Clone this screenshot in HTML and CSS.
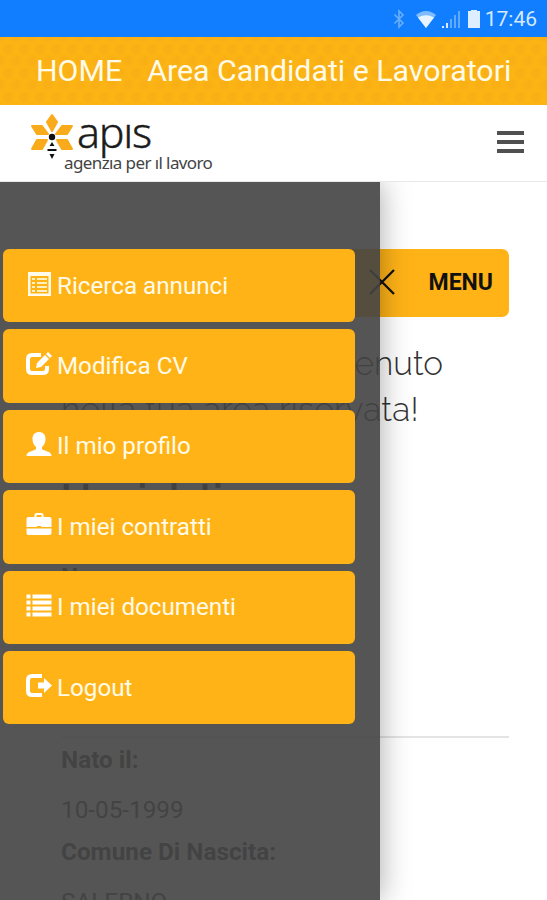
FILE: index.html
```html
<!DOCTYPE html>
<html lang="it">
<head>
    <meta charset="UTF-8">
    <meta name="viewport" content="width=device-width, initial-scale=1.0">
    <title>Apis - Area Candidati e Lavoratori</title>
    <link rel="stylesheet" href="styles.css">
</head>
<body>
    <div class="status-bar">
        <svg class="bluetooth" width="12" height="20" viewBox="0 0 12 20"><path d="M1.500 5.500 10 14 6 18V2l4 4-8.500 8.500" fill="none" stroke="#69aef8" stroke-width="1.600"/></svg>
        <svg class="wifi" width="20" height="17" viewBox="0 0 20 17"><path d="M0 4Q10-4 20 4L10 17Z" fill="#7fbcfb"/><path d="M2 6.500Q10 2 18 6.500L10 17Z" fill="#e8f4ff"/></svg>
        <svg class="signal" width="19" height="18" viewBox="0 0 19 18"><path d="M0 18v-2h2v2zM4 18v-5h2v5z" fill="#d8ebff"/><path d="M8 18V9h2v9zM12 18V5h2v13zM16 18V1h2v17z" fill="#62a9f8"/></svg>
        <svg class="battery" width="12" height="18" viewBox="0 0 12 18"><path d="M3 0h6v1h3v17H0V1h3z" fill="#dceeff"/></svg>
        <span class="clock">17:46</span>
    </div>

    <nav class="top-nav">
        <span>HOME</span>
        <span>Area Candidati e Lavoratori</span>
    </nav>

    <header class="header">
        <div class="logo">
            <svg class="bee" width="44" height="48" viewBox="0 0 44 48">
                <g fill="#f9ab1c" stroke="#f9ab1c" stroke-width="2" stroke-linejoin="round">
                    <path d="M22 2 27 9 22 18 17 9z"/>
                    <path d="M2 13h10l6 8H7z"/>
                    <path d="M42 13H32l-6 8h11z"/>
                    <path d="M2 36h10l5-9H7z"/>
                    <path d="M42 36H32l-5-9h10z"/>
                </g>
                <circle cx="22" cy="24" r="3.200" fill="#111"/>
                <path d="M22 29l2.500 4h-5zM17.500 36h9v2h-9zM19.500 41h5L22 46z" fill="#111"/>
            </svg>
            <div class="logo-text">
                <div class="brand">apıs</div>
                <div class="tagline">agenzıa per ıl lavoro</div>
            </div>
        </div>
        <div class="hamburger"><i></i><i></i><i></i></div>
    </header>

    <main class="page">
        <div class="menu-button">
            <svg width="26" height="26" viewBox="0 0 26 26"><path d="M1 1 25 25M25 1 1 25" stroke="#111" stroke-width="2.300"/></svg>
            <span>MENU</span>
        </div>
        <h1>Gentile Mario, benvenuto<br><span class="area">nella tua area riservata!</span></h1>
        <h2>I tuoi dati</h2>
        <dl class="details">
            <dt>Nome:</dt>
        </dl>
        <hr>
        <dl class="birth">
            <dt>Nato il:</dt>
            <dd>10-05-1999</dd>
            <dt>Comune Di Nascita:</dt>
            <dd>SALERNO</dd>
        </dl>

        <aside class="drawer">
            <a class="item">
                <svg width="26" height="24" viewBox="0 0 26 24"><path fill="#fffbe8" fill-rule="evenodd" d="M2 0h23v24H2zM4.500 4v17.500h18V4z"/><path d="M6 7h3m2 0h10M6 11h3m2 0h10M6 15h3m2 0h10M6 19h3m2 0h10" stroke="#fff0c0" stroke-width="1.800"/></svg>
                <span>Ricerca annunci</span>
            </a>
            <a class="item">
                <svg width="26" height="24" viewBox="0 0 26 24"><path d="M15 3H6Q2 3 2 7v10q0 4 4 4h11q4 0 4-4v-3" fill="none" stroke="#fff" stroke-width="4"/><path d="m10 16 1-5 8-8 4 4-8 8zM20 2l2-2 4 4-2 2z" fill="#fff"/></svg>
                <span>Modifica CV</span>
            </a>
            <a class="item">
                <svg width="26" height="25" viewBox="0 0 25 25"><path d="M12.500 0C8 0 6 3 6 7c0 4 1.500 6 3.500 8v2C8 19 0 19 0 24h25c0-5-8-5-9.500-7v-2C17.500 13 19 11 19 7c0-4-2-7-6.500-7z" fill="#fff"/></svg>
                <span>Il mio profilo</span>
            </a>
            <a class="item">
                <svg width="26" height="23" viewBox="0 0 25 23"><path fill="#fff" fill-rule="evenodd" d="M8 4V2q0-2 2-2h5q2 0 2 2v2h6q2 0 2 2v8h-10l-1-1h-3l-1 1H0V6q0-2 2-2zm2 0h5V2h-5z"/><path d="M0 15.500h25v4.500q0 2-2 2H2q-2 0-2-2z" fill="#fff"/></svg>
                <span>I miei contratti</span>
            </a>
            <a class="item">
                <svg width="26" height="23" viewBox="0 0 25 23"><path d="M0 2.500h4m2 0h19M0 8.500h4m2 0h19M0 14.500h4m2 0h19M0 20.500h4m2 0h19" stroke="#fff" stroke-width="4"/></svg>
                <span>I miei documenti</span>
            </a>
            <a class="item">
                <svg width="26" height="23" viewBox="0 0 26 23"><path d="M16 2H6Q2 2 2 6v11q0 4 4 4h10" fill="none" stroke="#fff" stroke-width="4"/><path d="M12 8.500h6V4l8 7.500-8 7.500v-4.500h-6z" fill="#fff"/></svg>
                <span>Logout</span>
            </a>
        </aside>
    </main>
</body>
</html>
```
FILE: styles.css
```css
* {
    box-sizing: border-box;
}

body {
    margin: 0;
    width: 547px;
    height: 900px;
    overflow: hidden;
    display: flex;
    flex-direction: column;
    font-family: Roboto, sans-serif;
    background-color: #fff;
    color: #333;
}

svg {
    display: block;
    flex: none;
}

.status-bar {
    height: 37px;
    flex: none;
    display: flex;
    align-items: center;
    justify-content: flex-end;
    padding: 1px 10px 0 0;
    background-color: #107eff;
    color: #d5eaff;
}

.bluetooth {
    margin-right: 11px;
}

.wifi {
    margin-right: 6px;
}

.signal {
    margin-right: 7px;
}

.battery {
    margin-right: 5px;
}

.clock {
    font-size: 21px;
    line-height: 36px;
}

.top-nav {
    height: 68px;
    flex: none;
    display: flex;
    align-items: center;
    gap: 25px;
    padding: 0 0 2px 36px;
    background-color: #fcb415;
    background-image: radial-gradient(circle, rgba(235, 155, 20, 0.18) 4px, transparent 6px), radial-gradient(circle, rgba(235, 155, 20, 0.18) 4px, transparent 6px);
    background-size: 16px 24px;
    background-position: 0 0, 8px 12px;
    color: #fffbe8;
    font-size: 30.300px;
    white-space: nowrap;
}

.header {
    height: 77px;
    flex: none;
    display: flex;
    justify-content: space-between;
    border-bottom: 1px solid #e8e8e8;
    padding: 0 23px 0 30px;
}

.logo {
    display: flex;
    padding-top: 8px;
}

.logo-text {
    margin-left: 3px;
    font-family: "Noto Sans", sans-serif;
    color: #1c1c1c;
}

.brand {
    font-size: 43px;
    font-weight: 300;
    line-height: 38px;
    height: 40px;
    letter-spacing: -1.300px;
    -webkit-text-stroke: 0.400px #1c1c1c;
}

.tagline {
    font-size: 17px;
    line-height: 19px;
    margin-left: -13px;
    letter-spacing: -0.600px;
    color: #444;
}

.hamburger {
    width: 27px;
    padding-top: 26px;
}

.hamburger i {
    display: block;
    height: 4px;
    margin-bottom: 5px;
    background-color: #505050;
}

.page {
    position: relative;
    flex: 1;
    padding: 67px 38px 0 61px;
    overflow: hidden;
}

.menu-button {
    display: flex;
    align-items: center;
    justify-content: flex-end;
    gap: 34px;
    width: 169px;
    height: 68px;
    margin-left: auto;
    padding: 0 16px 2px 0;
    border-radius: 7px;
    background-color: #ffb317;
    color: #111;
    font-size: 23px;
    font-weight: 700;
}

h1 {
    margin: 24px 0 0;
    font-family: Raleway, "Open Sans", sans-serif;
    font-size: 33.400px;
    font-weight: 300;
    line-height: 46px;
    white-space: nowrap;
}

.area {
    letter-spacing: 0.280px;
}

h2 {
    margin: 40px 0 0;
    font-family: Raleway, "Open Sans", sans-serif;
    font-size: 36px;
    line-height: 46px;
}

dl {
    margin: 0;
    font-size: 24.300px;
}

dt {
    height: 46px;
    line-height: 44px;
    font-weight: 700;
}

dd {
    height: 46px;
    margin: 0;
    line-height: 51px;
}

.details {
    height: 217px;
    padding-top: 36px;
}

hr {
    margin: 0;
    border: 0;
    border-top: 2px solid #e4e4e4;
}

.birth {
    color: #484848;
}

.drawer {
    position: absolute;
    top: 0;
    left: 0;
    bottom: 0;
    width: 380px;
    padding: 67px 25px 0 3px;
    display: flex;
    flex-direction: column;
    gap: 7px;
    background-color: rgba(66, 66, 66, 0.9);
    box-shadow: 0 0 28px rgba(0, 0, 0, 0.35);
}

.item {
    height: 73.400px;
    flex: none;
    display: flex;
    align-items: center;
    padding-left: 23px;
    border-radius: 6px;
    background-color: #ffb317;
    color: #fffbe8;
    font-size: 24.200px;
}

.item svg {
    margin: -4px 5px 0 0;
}
```
